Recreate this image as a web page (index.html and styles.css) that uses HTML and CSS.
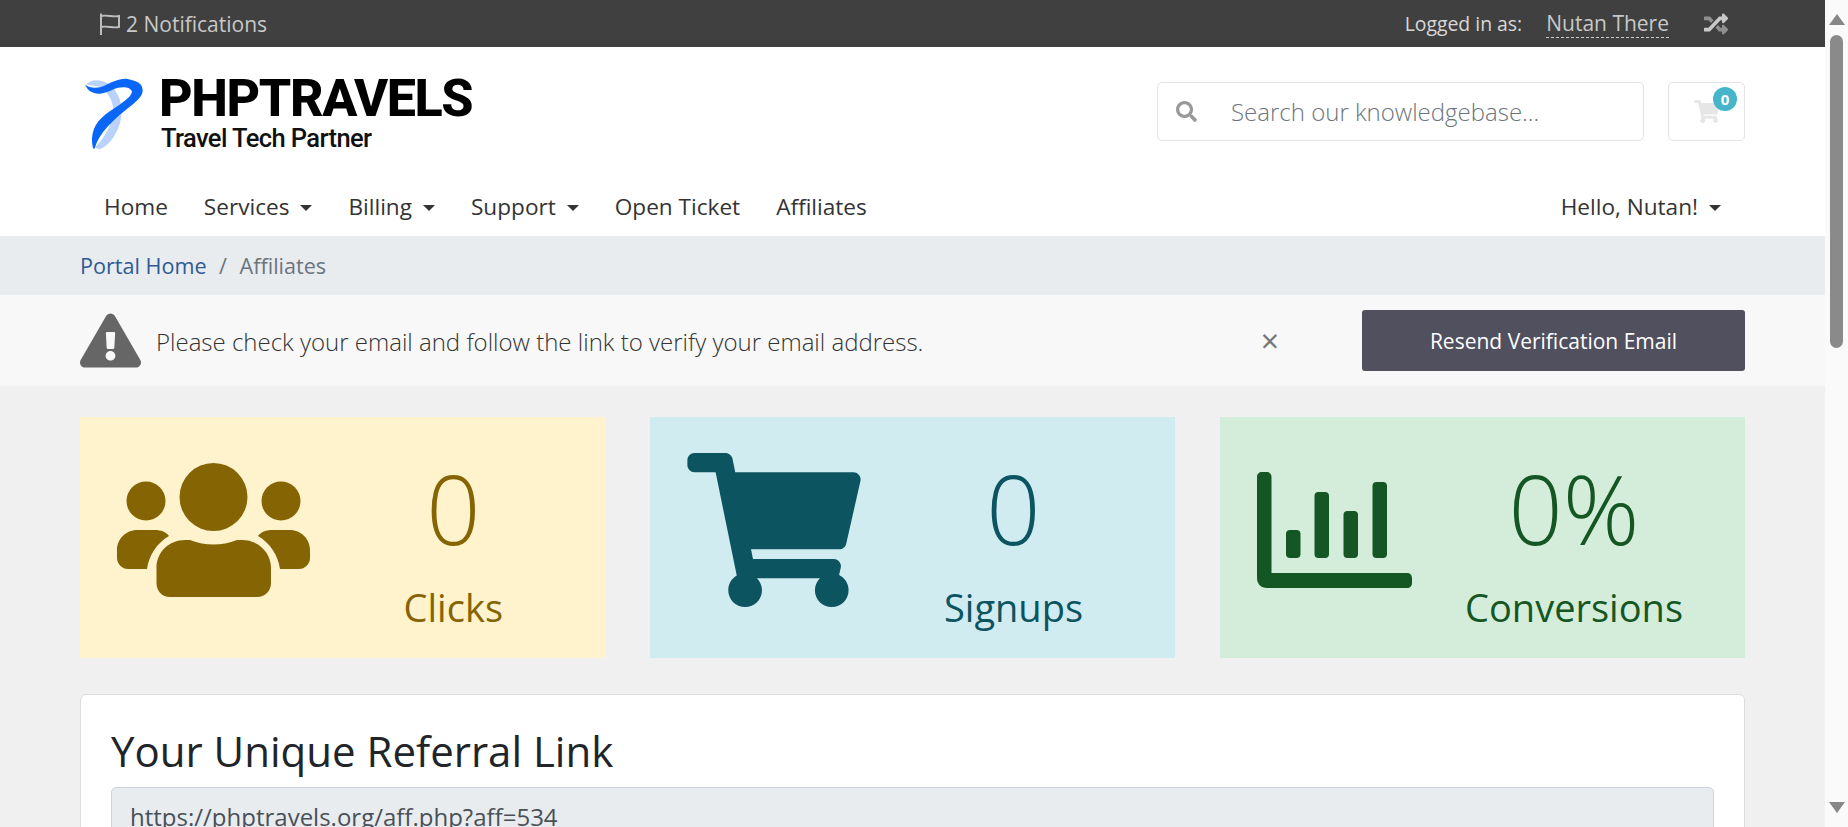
FILE: index.html
```html
<!DOCTYPE html>
<html lang="en">
<head>
    <meta charset="UTF-8">
    <title>Affiliates - PHPTRAVELS</title>
    <link rel="stylesheet" href="styles.css">
</head>
<body>
<div class="page">
<div class="main">

    <div class="topbar">
        <div class="notify">
            <svg class="flag" viewBox="0 0 22 24"><path d="M2 1.500V23M2 4C8 2.500 14 5.500 20 4V15C14 16.500 8 13.500 2 15" fill="none" stroke="#bdbdbd" stroke-width="2"/></svg>
            <span>2 Notifications</span>
        </div>
        <div class="login">
            <span class="login-label">Logged in as:</span>
            <a class="login-name">Nutan There</a>
            <svg class="shuffle" viewBox="0 0 512 512"><path fill="#8f8f8f" d="M504.971 359.029c9.373 9.373 9.373 24.569 0 33.941l-80 79.984c-15.01 15.01-40.971 4.49-40.971-16.971V416h-58.785a12.004 12.004 0 0 1-8.773-3.812l-70.556-75.596 53.333-57.143L352 336h32v-39.981c0-21.438 25.943-31.998 40.971-16.971l80 79.981zM12 176h84l52.781 56.551 53.333-57.143-70.556-75.596A11.999 11.999 0 0 0 122.785 96H12c-6.627 0-12 5.373-12 12v56c0 6.627 5.373 12 12 12z"/><path fill="#c9c9c9" d="M384 176v39.984c0 21.46 25.961 31.98 40.971 16.971l80-79.984c9.373-9.373 9.373-24.569 0-33.941l-80-79.981C409.943 24.021 384 34.582 384 56.019V96h-58.785a12.004 12.004 0 0 0-8.773 3.812L96 336H12c-6.627 0-12 5.373-12 12v56c0 6.627 5.373 12 12 12h110.785c3.326 0 6.503-1.381 8.773-3.812L352 176h32z"/></svg>
        </div>
    </div>

    <div class="header">
        <div class="logo">
            <svg class="logo-mark" viewBox="40 45 185 220">
                <path fill="#b9d3fc" d="M50 68C60 52 90 50 110 62C140 80 155 110 155 150C155 195 125 245 95 258C85 262 78 258 78 252C105 225 128 185 130 145C130 110 110 85 85 72Z"/>
                <path fill="#0a66f7" d="M46 68C60 98 90 102 130 82C150 72 182 72 186 88C186 108 135 135 105 158C75 182 60 215 70 258C75 258 75 258 75 258C85 215 130 170 190 125C205 112 218 100 218 85C218 65 205 58 170 50C150 48 120 62 105 70C85 80 60 78 46 68Z"/>
            </svg>
            <div class="logo-text">
                <div class="logo-name">PHPTRAVELS</div>
                <div class="logo-tag">Travel Tech Partner</div>
            </div>
        </div>
        <div class="header-right">
            <div class="search">
                <svg class="search-icon" viewBox="0 0 512 512"><path fill="#999" d="M505 442.7L405.3 343c-4.5-4.5-10.6-7-17-7H372c27.6-35.3 44-79.7 44-128C416 93.1 322.9 0 208 0S0 93.1 0 208s93.1 208 208 208c48.3 0 92.7-16.4 128-44v16.3c0 6.4 2.5 12.5 7 17l99.7 99.7c9.4 9.4 24.6 9.4 33.9 0l28.3-28.3c9.4-9.4 9.4-24.6.1-34zM208 336c-70.7 0-128-57.2-128-128 0-70.7 57.2-128 128-128 70.7 0 128 57.2 128 128 0 70.7-57.2 128-128 128z"/></svg>
                <span class="search-text">Search our knowledgebase...</span>
            </div>
            <div class="cart">
                <svg class="cart-icon" viewBox="0 0 576 512"><path fill="#e6e6e6" d="M528.12 301.319l47.273-208C578.806 78.301 567.391 64 551.99 64H159.208l-9.166-44.81C147.758 8.021 137.93 0 126.529 0H24C10.745 0 0 10.745 0 24v16c0 13.255 10.745 24 24 24h69.883l70.248 343.435C147.325 417.1 136 435.222 136 456c0 30.928 25.072 56 56 56s56-25.072 56-56c0-15.674-6.447-29.835-16.824-40h209.647C430.447 426.165 424 440.326 424 456c0 30.928 25.072 56 56 56s56-25.072 56-56c0-22.172-12.888-41.332-31.579-50.405l5.517-24.276c3.413-15.018-8.002-29.319-23.403-29.319H218.117l-6.545-32h293.145c11.206 0 20.92-7.754 23.403-18.681z"/></svg>
                <span class="badge">0</span>
            </div>
        </div>
    </div>

    <div class="nav">
        <a>Home</a>
        <a class="caret">Services</a>
        <a class="caret">Billing</a>
        <a class="caret">Support</a>
        <a>Open Ticket</a>
        <a>Affiliates</a>
        <a class="caret nav-user">Hello, Nutan!</a>
    </div>

    <div class="crumbs">
        <a>Portal Home</a>
        <span class="sep">/</span>
        <span class="crumb-now">Affiliates</span>
    </div>

    <div class="alert">
        <svg class="alert-icon" viewBox="0 0 576 512"><path fill="#666" d="M569.517 440.013C587.975 472.007 564.806 512 527.94 512H48.054c-36.937 0-59.999-40.055-41.577-71.987L246.423 23.985c18.467-32.009 64.72-31.951 83.154 0l239.94 416.028zM288 354c-25.405 0-46 20.595-46 46s20.595 46 46 46 46-20.595 46-46-20.595-46-46-46zm-43.673-165.346l7.418 136c.347 6.364 5.609 11.346 11.982 11.346h48.546c6.373 0 11.635-4.982 11.982-11.346l7.418-136c.375-6.874-5.098-12.654-11.982-12.654h-63.383c-6.884 0-12.356 5.78-11.981 12.654z"/></svg>
        <span class="alert-text">Please check your email and follow the link to verify your email address.</span>
        <span class="alert-close">&times;</span>
        <button class="resend">Resend Verification Email</button>
    </div>

    <div class="content">
        <div class="tiles">
            <div class="tile tile-clicks">
                <svg class="tile-icon" width="193" height="135" viewBox="0 0 193 135">
                    <circle cx="96.5" cy="35" r="34"/>
                    <circle cx="29" cy="39" r="19.5"/>
                    <circle cx="164" cy="39" r="19.5"/>
                    <path d="M39.5 121V106C39.5 90 52 78 68 78H73Q96.5 87 120 78H125C141 78 154 90 154 106V121C154 129 148 135 140 135H53C45 135 39.5 129 39.5 121Z"/>
                    <path d="M0 96V88C0 77 9 68 20 68H38C44 68 49 70 52 74C40 81 32 93 30 107H11C5 107 0 102 0 96Z"/>
                    <path d="M193 96V88C193 77 184 68 173 68H155C149 68 144 70 141 74C153 81 161 93 163 107H182C188 107 193 102 193 96Z"/>
                </svg>
                <div class="tile-stat">
                    <div class="tile-num">0</div>
                    <div class="tile-label">Clicks</div>
                </div>
            </div>
            <div class="tile tile-signups">
                <svg class="tile-icon" width="174" height="154" viewBox="0 0 576 512"><path d="M528.12 301.319l47.273-208C578.806 78.301 567.391 64 551.99 64H159.208l-9.166-44.81C147.758 8.021 137.93 0 126.529 0H24C10.745 0 0 10.745 0 24v16c0 13.255 10.745 24 24 24h69.883l70.248 343.435C147.325 417.1 136 435.222 136 456c0 30.928 25.072 56 56 56s56-25.072 56-56c0-15.674-6.447-29.835-16.824-40h209.647C430.447 426.165 424 440.326 424 456c0 30.928 25.072 56 56 56s56-25.072 56-56c0-22.172-12.888-41.332-31.579-50.405l5.517-24.276c3.413-15.018-8.002-29.319-23.403-29.319H218.117l-6.545-32h293.145c11.206 0 20.92-7.754 23.403-18.681z"/></svg>
                <div class="tile-stat">
                    <div class="tile-num">0</div>
                    <div class="tile-label">Signups</div>
                </div>
            </div>
            <div class="tile tile-conversions">
                <svg class="tile-icon" width="155" height="116" viewBox="0 0 155 116">
                    <path d="M0 5C0 2 2 0 5 0H9.500C12.500 0 14.500 2 14.500 5V101H150C153 101 155 103 155 106V111C155 114 153 116 150 116H10C4 116 0 112 0 106Z"/>
                    <rect x="29" y="58" width="14.500" height="28" rx="4"/>
                    <rect x="57.500" y="20" width="14.500" height="66" rx="4"/>
                    <rect x="86.500" y="39" width="14.500" height="47" rx="4"/>
                    <rect x="115.500" y="10" width="14.500" height="76" rx="4"/>
                </svg>
                <div class="tile-stat">
                    <div class="tile-num">0%</div>
                    <div class="tile-label">Conversions</div>
                </div>
            </div>
        </div>

        <div class="card">
            <h2 class="card-title">Your Unique Referral Link</h2>
            <div class="ref-input">https://phptravels.org/aff.php?aff=534</div>
        </div>
    </div>

</div>

<div class="scrollbar">
    <span class="arrow-up"></span>
    <div class="track"><div class="thumb"></div></div>
    <span class="arrow-down"></span>
</div>
</div>
</body>
</html>
```

FILE: styles.css
```css
html, body {
    margin: 0;
    padding: 0;
    height: 827px;
    overflow: hidden;
}
body {
    font-family: "Open Sans", sans-serif;
    color: #333;
    background-color: #f0f0f0;
}
.page {
    display: flex;
    height: 827px;
    overflow: hidden;
}
.main {
    flex: 1;
    min-width: 0;
    overflow: hidden;
}

/* top bar */
.topbar {
    height: 47px;
    background-color: #404040;
    color: #d0d0d0;
    display: flex;
    justify-content: space-between;
    align-items: center;
    padding: 0 97px 0 99px;
}
.notify {
    display: flex;
    align-items: center;
    gap: 5px;
    font-size: 21px;
    color: #c8c8c8;
}
.flag {
    width: 22px;
    height: 24px;
}
.login {
    display: flex;
    align-items: center;
}
.login-label {
    font-size: 19.4px;
    color: #d8d8d8;
    margin-right: 24px;
}
.login-name {
    font-size: 21px;
    color: #c8c8c8;
    border-bottom: 1px dashed #ccc;
    line-height: 28px;
    margin-right: 35px;
}
.shuffle {
    width: 24px;
    height: 24px;
}

/* header */
.header {
    background-color: #fff;
    height: 129px;
    display: flex;
    justify-content: space-between;
    padding: 0 80px 0 83px;
}
.logo {
    display: flex;
    align-items: flex-start;
    padding-top: 27px;
    gap: 14px;
}
.logo-mark {
    width: 62px;
    height: 74px;
    margin-top: 3px;
}
.logo-name {
    font-family: Roboto, sans-serif;
    font-weight: 800;
    font-size: 52px;
    line-height: 50px;
    letter-spacing: -1.4px;
    color: #000;
}
.logo-tag {
    font-family: Roboto, sans-serif;
    font-weight: 500;
    font-size: 25.5px;
    line-height: 26px;
    letter-spacing: -0.6px;
    color: #111;
    margin: 1px 0 0 2px;
}
.header-right {
    display: flex;
    gap: 24px;
    padding-top: 35px;
}
.search {
    width: 485px;
    height: 57px;
    border: 1px solid #e4e4e4;
    border-radius: 5px;
    display: flex;
    align-items: center;
    background-color: #fff;
}
.search-icon {
    width: 21px;
    height: 21px;
    margin: 0 34px 0 18px;
}
.search-text {
    font-size: 24px;
    font-weight: 300;
    color: #6c757d;
}
.cart {
    width: 75px;
    height: 57px;
    border: 1px solid #e4e4e4;
    border-radius: 5px;
    position: relative;
    display: flex;
    align-items: center;
    justify-content: center;
}
.cart-icon {
    width: 26px;
    height: 23px;
}
.badge {
    position: absolute;
    top: 4px;
    right: 7px;
    width: 24px;
    height: 24px;
    border-radius: 50%;
    background-color: #46b5c9;
    color: #fff;
    font-size: 15px;
    font-weight: 700;
    text-align: center;
    line-height: 24px;
}

/* nav */
.nav {
    background-color: #fff;
    height: 60px;
    display: flex;
    align-items: flex-start;
    padding: 0 104px 0 104px;
    gap: 36px;
    font-size: 22.6px;
    color: #333;
    line-height: 61px;
}
.caret::after {
    content: "";
    display: inline-block;
    margin-left: 11px;
    vertical-align: 4px;
    border-top: 6px solid #333;
    border-left: 6px solid transparent;
    border-right: 6px solid transparent;
}
.nav-user {
    margin-left: auto;
}

/* breadcrumb */
.crumbs {
    height: 59px;
    background-color: #e9ecef;
    display: flex;
    align-items: center;
    padding-left: 80px;
    font-size: 21.6px;
}
.crumbs a {
    color: #2f5a94;
}
.sep {
    color: #6c757d;
    margin: 0 12.5px;
}
.crumb-now {
    color: #6c757d;
}

/* verification alert */
.alert {
    height: 91px;
    background-color: #f8f8f8;
    display: flex;
    align-items: center;
    padding: 0 80px;
}
.alert-icon {
    width: 61px;
    height: 55px;
    margin-right: 15px;
}
.alert-text {
    font-size: 24px;
    font-weight: 300;
    color: #333;
    flex: 1;
    margin-top: 2px;
}
.alert-close {
    font-size: 32px;
    color: #777;
    margin-right: 83px;
}
.resend {
    width: 383px;
    height: 61px;
    background-color: #50505f;
    border: none;
    border-radius: 3px;
    color: #fff;
    font-family: "Open Sans", sans-serif;
    font-size: 21px;
}

/* tiles */
.content {
    padding: 31px 80px 0;
}
.tiles {
    display: grid;
    grid-template-columns: repeat(3, 525px);
    justify-content: space-between;
}
.tile {
    height: 241px;
    display: flex;
    justify-content: space-between;
    align-items: flex-start;
    padding-left: 37px;
}
.tile-clicks {
    background-color: #fff3cd;
    color: #856404;
    fill: #856404;
}
.tile-signups {
    background-color: #d1ecf1;
    color: #0c5460;
    fill: #0c5460;
}
.tile-conversions {
    background-color: #d4edda;
    color: #155724;
    fill: #155724;
}
.tile-clicks .tile-icon {
    margin-top: 45px;
}
.tile-signups .tile-icon {
    margin-top: 36px;
}
.tile-conversions .tile-icon {
    margin-top: 55px;
}
.tile-stat {
    text-align: center;
    padding-top: 26px;
}
.tile-clicks .tile-stat {
    padding-right: 102px;
}
.tile-signups .tile-stat {
    padding-right: 92px;
}
.tile-conversions .tile-stat {
    padding-right: 62px;
}
.tile-num {
    font-size: 95px;
    font-weight: 300;
    line-height: 130px;
}
.tile-label {
    font-size: 38px;
    line-height: 50px;
    margin-top: 9px;
}

/* referral card */
.card {
    margin-top: 36px;
    background-color: #fff;
    border: 1px solid #ddd;
    border-radius: 6px;
    padding: 30px;
}
.card-title {
    margin: 0 0 10px;
    font-size: 42px;
    font-weight: 400;
    line-height: 52px;
    color: #212529;
}
.ref-input {
    background-color: #e9ecef;
    border: 1px solid #ced4da;
    border-radius: 5px;
    padding: 12px 18px;
    font-size: 24px;
    color: #495057;
}

/* scrollbar */
.scrollbar {
    width: 23px;
    background-color: #fafafa;
    display: flex;
    flex-direction: column;
    align-items: center;
}
.arrow-up {
    margin-top: 14px;
    border-bottom: 11px solid #868686;
    border-left: 8px solid transparent;
    border-right: 8px solid transparent;
}
.track {
    flex: 1;
    padding-top: 10px;
}
.thumb {
    width: 13px;
    height: 313px;
    border-radius: 7px;
    background-color: #8a8a8a;
}
.arrow-down {
    margin-bottom: 14px;
    border-top: 11px solid #868686;
    border-left: 8px solid transparent;
    border-right: 8px solid transparent;
}
```
